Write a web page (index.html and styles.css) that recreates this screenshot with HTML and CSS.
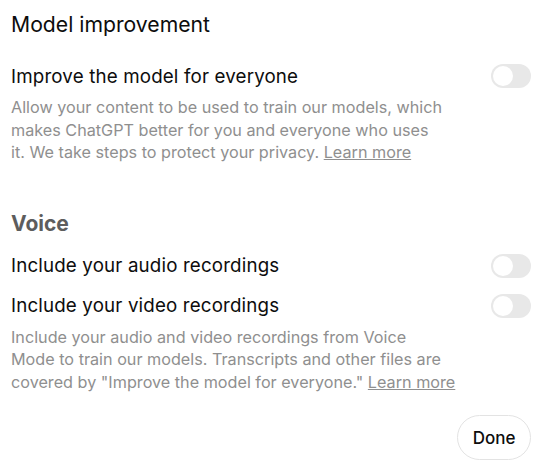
FILE: index.html
```html
<!DOCTYPE html>
<html lang="en">
<head>
    <meta charset="UTF-8">
    <title>Data controls</title>
    <link rel="stylesheet" href="styles.css">
</head>
<body>

<div class="panel">
    <h2 class="title">Model improvement</h2>

    <div class="row">
        <span class="label">Improve the model for everyone</span>
        <span class="toggle"></span>
    </div>
    <p class="desc">
        Allow your content to be used to train our models, which<br>
        makes ChatGPT better for you and everyone who uses<br>
        it. We take steps to protect your privacy. <a href="#">Learn more</a>
    </p>

    <h3 class="section">Voice</h3>

    <div class="row">
        <span class="label">Include your audio recordings</span>
        <span class="toggle"></span>
    </div>
    <div class="row">
        <span class="label">Include your video recordings</span>
        <span class="toggle"></span>
    </div>
    <p class="desc">
        Include your audio and video recordings from Voice<br>
        Mode to train our models. Transcripts and other files are<br>
        covered by "Improve the model for everyone." <a href="#">Learn more</a>
    </p>

    <div class="footer">
        <button class="btn">Done</button>
    </div>
</div>

</body>
</html>
```

FILE: styles.css
```css
body {
    margin: 0;
    background: #fff;
    font-family: "Inter", "Noto Sans", sans-serif;
    color: #0d0d0d;
}

.panel {
    width: 520px;
    padding: 10px 15px 0 11px;
}

.title {
    margin: 0;
    font-size: 21.2px;
    font-weight: 400;
    line-height: 28px;
}

.section {
    margin: 46px 0 0;
    font-size: 21px;
    font-weight: 650;
    line-height: 28px;
    color: #5d5d5d;
}

.row {
    display: flex;
    align-items: center;
    justify-content: space-between;
    height: 40px;
}

.row:first-of-type {
    margin-top: 18px;
}

.section + .row {
    margin-top: 8px;
}

.label {
    font-size: 18.75px;
    letter-spacing: 0.15px;
}

.toggle {
    width: 40px;
    height: 24px;
    border-radius: 12px;
    background: #e8e8e8;
    position: relative;
}

/* knob */
.toggle::after {
    content: "";
    position: absolute;
    left: 2px;
    top: 2px;
    width: 20px;
    height: 20px;
    border-radius: 50%;
    background: #fff;
}

.desc {
    margin: 0;
    width: 470px;
    font-size: 16.2px;
    line-height: 22.5px;
    color: #8f8f8f;
    white-space: nowrap;
}

.desc a {
    color: #8f8f8f;
    text-decoration: underline;
}

.footer {
    display: flex;
    justify-content: flex-end;
    margin-top: 22px;
}

.btn {
    height: 45px;
    width: 74px;
    padding: 0;
    border: 1px solid #e3e3e3;
    border-radius: 23px;
    background: #fff;
    font-family: inherit;
    font-size: 17px;
    font-weight: 500;
    color: #0d0d0d;
}
```
